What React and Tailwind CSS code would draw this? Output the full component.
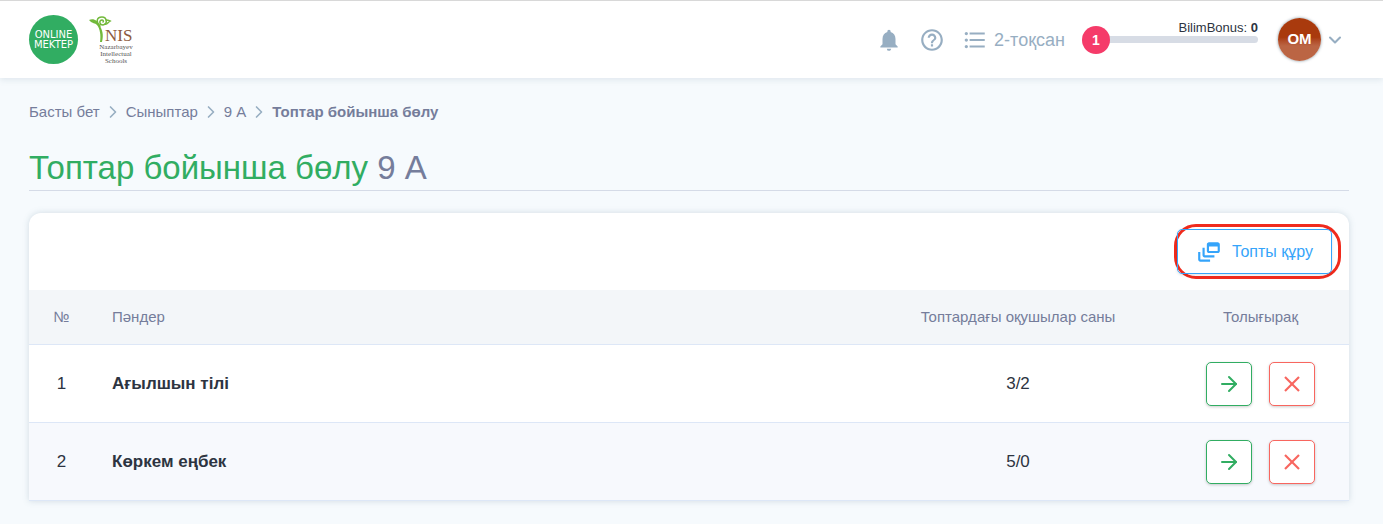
import { ArrowRight, ChevronDown, ChevronRight, X } from 'lucide-react'
import { MdDynamicFeed, MdFormatListBulleted, MdHelpOutline, MdNotifications } from 'react-icons/md'

const groups = [
  { id: 1, subject: 'Ағылшын тілі', students: '3/2' },
  { id: 2, subject: 'Көркем еңбек', students: '5/0' },
]

const crumbs = ['Басты бет', 'Сыныптар', '9 А']

const MektepLogo = () => (
  <a href="#" className="flex size-[49px] flex-col items-center justify-center rounded-full bg-[#31ad62] font-['DejaVu_Sans',sans-serif] text-[10px] leading-[10px] text-white">
    <span>ONLINE</span>
    <span>MEKTEP</span>
  </a>
)

const NisLogo = () => (
  <a href="#" aria-label="NIS">
    <svg width="48" height="50" viewBox="0 0 48 50">
      <path d="M1 5 C5 3 10 5 12 11 C14 15 16 19 14 27 L12 27 C13 20 12 14 9 10 C7 8 4 8 3 7 Z" fill="#72b93b" />
      <g fill="none" stroke="#72b93b" strokeLinecap="round">
        <path d="M12 11 C8 8 8 2 14 2 C19 2 20 9 15 10 C11 10 11 5 14 5 C15 5 16 6 15 7" strokeWidth="1.5" />
        <path d="M17 9 C19 10 20 7 22 6 C20 5 19 5 18 5" strokeWidth="1.5" />
      </g>
      <text x="17" y="26" fontSize="17" fill="#8d5a40" fontFamily="Liberation Serif, serif">NIS</text>
      <g fontSize="7" fill="#555555" textAnchor="middle" fontFamily="Liberation Serif, serif">
        <text x="28" y="34">Nazarbayev</text>
        <text x="28" y="41">Intellectual</text>
        <text x="28" y="48">Schools</text>
      </g>
    </svg>
  </a>
)

const Header = () => (
  <header className="flex h-[78px] items-center justify-between border-t border-[#d8d8d8] bg-white pr-[38px] pl-[29px] shadow-[0_2px_6px_rgba(100,130,150,0.15)]">
    <div className="flex items-center gap-[10px]">
      <MektepLogo />
      <NisLogo />
    </div>
    <div className="flex items-center text-[#97aec2]">
      <button aria-label="Хабарламалар" className="mr-[17px]">
        <MdNotifications size={26} />
      </button>
      <button aria-label="Көмек" className="mr-[17px]">
        <MdHelpOutline size={26} />
      </button>
      <button className="mr-[17px] flex items-center gap-[6px] text-lg">
        <MdFormatListBulleted size={26} />
        2-тоқсан
      </button>
      <div className="relative mr-5 flex w-44 items-center">
        <span className="z-10 flex size-7 items-center justify-center rounded-full bg-[#f53b69] text-sm font-bold text-white">1</span>
        <span className="-ml-1 h-[7px] flex-1 rounded-r-full bg-[#d7dce5]" />
        <span className="absolute right-0 bottom-4 text-[13px] leading-5 whitespace-nowrap text-[#2d3441]">
          BilimBonus: <b>0</b>
        </span>
      </div>
      <button className="flex items-center gap-1">
        <span className="flex size-[43px] items-center justify-center rounded-full bg-linear-to-b from-[#a93a0d] from-45% to-[#bb6544] to-65% text-[15px] font-bold text-white shadow-[0_0_3px_rgba(40,70,90,0.6)]">
          OM
        </span>
        <ChevronDown size={20} strokeWidth={2.5} />
      </button>
    </div>
  </header>
)

const Breadcrumbs = () => (
  <nav className="flex items-center text-[15px] leading-5 text-[#757d9b]">
    {crumbs.map(crumb => (
      <span key={crumb} className="flex items-center">
        <a href="#">{crumb}</a>
        <ChevronRight size={20} className="mx-[3px] text-[#97aec2]" />
      </span>
    ))}
    <span className="font-bold">Топтар бойынша бөлу</span>
  </nav>
)

const GroupsTable = () => (
  <table className="w-full table-fixed border-separate border-spacing-0 text-[17px] text-[#2d3441] [&_td]:border-b [&_td]:border-[#dde7f7] [&_th]:border-b [&_th]:border-[#dde7f7]">
    <thead className="bg-[#f3f6f9] text-[15px] text-[#757d9b]">
      <tr className="h-[55px]">
        <th className="w-[65px] font-normal">№</th>
        <th className="pl-[18px] text-left font-normal">Пәндер</th>
        <th className="w-[308px] font-normal">Топтардағы оқушылар саны</th>
        <th className="w-[177px] font-normal">Толығырақ</th>
      </tr>
    </thead>
    <tbody>
      {groups.map(group => (
        <tr key={group.id} className="h-[78px] even:bg-[#f7f9fd]">
          <td className="text-center">{group.id}</td>
          <td className="pl-[18px] font-bold">{group.subject}</td>
          <td className="text-center">{group.students}</td>
          <td>
            <div className="flex justify-center gap-[17px]">
              <button aria-label="Ашу" className="flex h-11 w-[46px] items-center justify-center rounded-[5px] border border-[#31ad62] bg-white text-[#31ad62] shadow-[0_1px_3px_rgba(0,0,0,0.2)]">
                <ArrowRight size={24} />
              </button>
              <button aria-label="Жою" className="flex h-11 w-[46px] items-center justify-center rounded-[5px] border border-[#f8665f] bg-white text-[#f8665f] shadow-[0_1px_3px_rgba(0,0,0,0.2)]">
                <X size={28} strokeWidth={1.8} strokeLinecap="butt" />
              </button>
            </div>
          </td>
        </tr>
      ))}
    </tbody>
  </table>
)

const App = () => {
  return (
    <div className="min-h-screen bg-[#f6fafd] font-['Liberation_Sans',Arial,sans-serif]">
      <Header />
      <main className="pt-6 pr-[34px] pb-6 pl-[29px]">
        <Breadcrumbs />
        <h1 className="mt-6 border-b border-[#d5dbe7] text-[33px] leading-[44px] text-[#757d9b]">
          <span className="text-[#31ad62]">Топтар бойынша бөлу</span> 9 А
        </h1>
        <section className="mt-[22px] rounded-t-xl bg-white shadow-[0_0_6px_rgba(100,130,150,0.25)]">
          <div className="flex justify-end py-[11px] pr-2">
            <div className="rounded-[22px] border-3 border-[#f02b1d] py-[2px] pr-[6px] pl-0">
              <button className="flex h-[45px] items-center gap-[10px] rounded-[5px] border border-[#35a4fa] px-[18px] text-base text-[#35a4fa] shadow-[0_1px_3px_rgba(0,0,0,0.12)]">
                <MdDynamicFeed size={26} />
                Топты құру
              </button>
            </div>
          </div>
          <GroupsTable />
        </section>
      </main>
    </div>
  )
}

export default App
